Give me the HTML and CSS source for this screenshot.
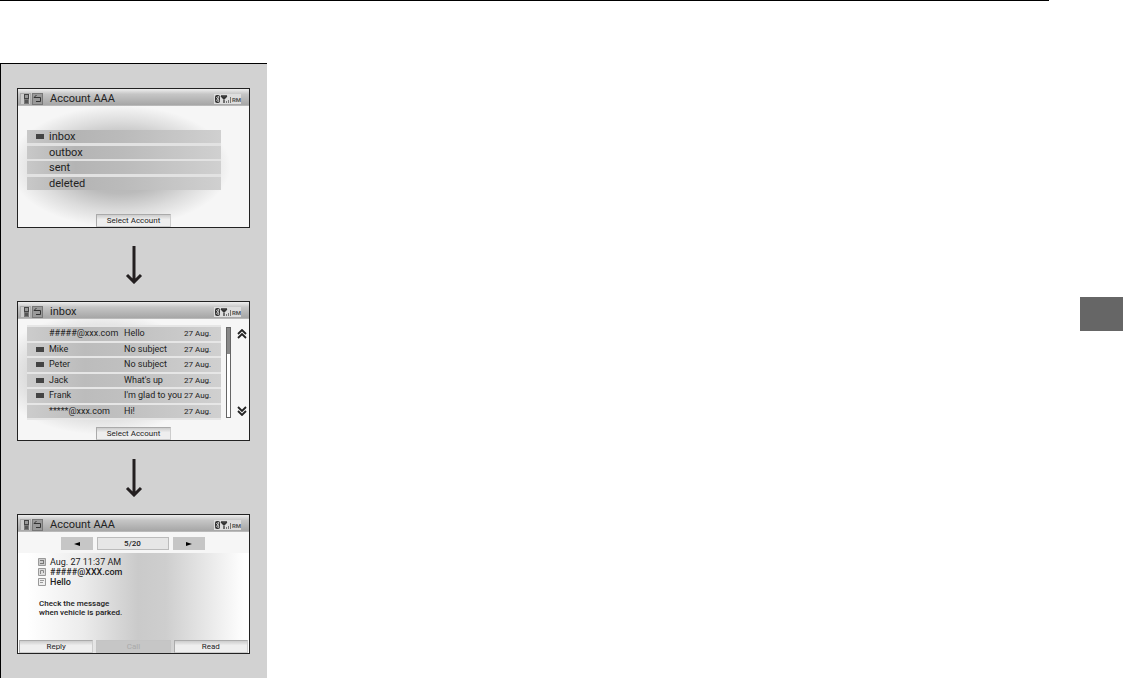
FILE: index.html
```
<!DOCTYPE html>
<html lang="en">
<head>
  <meta charset="UTF-8" />
  <meta name="viewport" content="width=device-width, initial-scale=1.0" />
  <title>Mail screens</title>
  <link rel="stylesheet" href="styles.css">
</head>
<body>
  <!-- shared icons -->
  <svg class="sprite" aria-hidden="true">
    <symbol id="phone" viewBox="0 0 9 10">
      <path d="M3 0h5v10H3z" fill="#777" />
      <path d="M3 0h5v5H3z" fill="#444" />
      <path d="M4 1h3v3H4z" fill="#999" />
      <path d="M4 6h3v3H4z" fill="#555" />
    </symbol>
    <symbol id="back" viewBox="0 0 9 10">
      <path d="M1 3.500h6.500v4H3M3.500 1L1 3.500h3" fill="none" stroke="#333" stroke-width="1" />
    </symbol>
    <symbol id="signal" viewBox="0 0 18 10">
      <rect x="1" y="1" width="5" height="8" rx="2" fill="#333" />
      <path d="M2 3l3 3-1 2V2l1 1-3 4" fill="none" stroke="#ddd" stroke-width=".7" />
      <path d="M7 2h6M7 2l3 3 3-3M10 2v7" fill="none" stroke="#333" stroke-width="1.3" />
      <path d="M12.500 7v2M14.500 6v3M16.500 3v6" stroke="#777" stroke-width="1" />
    </symbol>
    <symbol id="arrow" viewBox="0 0 18 38">
      <path d="M9 0v36M2 29l7 7 7-7" fill="none" stroke="#231f20" stroke-width="3" />
    </symbol>
    <symbol id="chevrons" viewBox="0 0 10 10">
      <path d="M1 5l4-4 4 4M1 9l4-4 4 4" fill="none" stroke="#222" stroke-width="1.8" />
    </symbol>
  </svg>

  <main class="page">
    <section class="steps">
      <article class="screen glow">
        <header class="titlebar">
          <button class="tool" aria-label="Phone"><svg><use href="#phone" /></svg></button>
          <button class="tool dark" aria-label="Back"><svg><use href="#back" /></svg></button>
          <h2>Account AAA</h2>
          <span class="status"><svg><use href="#signal" /></svg>RM</span>
        </header>
        <ul class="folders">
          <li><a href="#inbox"><i class="mark"></i>inbox</a></li>
          <li><a href="#outbox">outbox</a></li>
          <li><a href="#sent">sent</a></li>
          <li><a href="#deleted">deleted</a></li>
        </ul>
        <footer class="actions"><button>Select Account</button></footer>
      </article>

      <svg class="next" aria-hidden="true"><use href="#arrow" /></svg>

      <article class="screen glow faint" id="inbox">
        <header class="titlebar">
          <button class="tool" aria-label="Phone"><svg><use href="#phone" /></svg></button>
          <button class="tool dark" aria-label="Back"><svg><use href="#back" /></svg></button>
          <h2>inbox</h2>
          <span class="status"><svg><use href="#signal" /></svg>RM</span>
        </header>
        <div class="mail">
          <table>
            <tr><td class="flag"></td><td class="from">#####@xxx.com</td><td>Hello</td><td class="date">27 Aug.</td></tr>
            <tr><td class="flag"><i class="mark"></i></td><td class="from">Mike</td><td>No subject</td><td class="date">27 Aug.</td></tr>
            <tr><td class="flag"><i class="mark"></i></td><td class="from">Peter</td><td>No subject</td><td class="date">27 Aug.</td></tr>
            <tr><td class="flag"><i class="mark"></i></td><td class="from">Jack</td><td>What's up</td><td class="date">27 Aug.</td></tr>
            <tr><td class="flag"><i class="mark"></i></td><td class="from">Frank</td><td>I'm glad to you</td><td class="date">27 Aug.</td></tr>
            <tr><td class="flag"></td><td class="from">*****@xxx.com</td><td>Hi!</td><td class="date">27 Aug.</td></tr>
          </table>
          <div class="track"><div class="thumb"></div></div>
          <div class="scroll">
            <button aria-label="Page up"><svg><use href="#chevrons" /></svg></button>
            <button class="down" aria-label="Page down"><svg><use href="#chevrons" /></svg></button>
          </div>
        </div>
        <footer class="actions"><button>Select Account</button></footer>
      </article>

      <svg class="next" aria-hidden="true"><use href="#arrow" /></svg>

      <article class="screen message">
        <header class="titlebar">
          <button class="tool" aria-label="Phone"><svg><use href="#phone" /></svg></button>
          <button class="tool dark" aria-label="Back"><svg><use href="#back" /></svg></button>
          <h2>Account AAA</h2>
          <span class="status"><svg><use href="#signal" /></svg>RM</span>
        </header>
        <nav class="pager">
          <button aria-label="Previous"><svg viewBox="0 0 6 6"><path d="M6 1v4L0 3z" /></svg></button>
          <span class="count">5/20</span>
          <button aria-label="Next"><svg viewBox="0 0 6 6"><path d="M0 1v4l6-2z" /></svg></button>
        </nav>
        <ul class="details">
          <li class="when"><svg viewBox="0 0 8 8"><path d="M.5.5h7v7h-7z" fill="#ccc" stroke="#999" /><path d="M2 2.500h4M2 5.500h4M5.500 2v4" stroke="#777" /></svg>Aug. 27 11:37 AM</li>
          <li><svg viewBox="0 0 8 8"><path d="M.5.5h7v7h-7z" fill="#ddd" stroke="#999" /><path d="M2.500 6V2.500h3V5" fill="none" stroke="#888" /></svg>#####@XXX.com</li>
          <li><svg viewBox="0 0 8 8"><path d="M.5.5h7v7h-7z" fill="#eee" stroke="#999" /><path d="M2 2.500h4M2 4.500h3" stroke="#999" /></svg>Hello</li>
        </ul>
        <p class="text">Check the message<br>when vehicle is parked.</p>
        <footer class="actions">
          <button>Reply</button>
          <button disabled>Call</button>
          <button>Read</button>
        </footer>
      </article>
    </section>
  </main>
  <aside class="rail"><div class="tab"></div></aside>
</body>
</html>
```
FILE: styles.css
```
* {
  box-sizing: border-box;
}

body {
  margin: 0;
  display: flex;
  min-height: 100vh;
  background: #fff;
  color: #222;
  font-family: Roboto, "Liberation Sans", sans-serif;
}

h2, p, ul {
  margin: 0;
  padding: 0;
}

ul {
  list-style: none;
}

button {
  padding: 0;
  border: 0;
  color: inherit;
  font-family: inherit;
  cursor: pointer;
}

svg {
  display: block;
}

.sprite {
  position: absolute;
  width: 0;
  height: 0;
}

/* page frame */
.page {
  flex: 1;
  display: flex;
  align-items: stretch;
  padding-top: 62px;
  border-top: 1px solid #000;
}

.rail {
  width: 74px;
  padding: 297px 0 0 31px;
}

.tab {
  height: 34px;
  background: #666;
}

.steps {
  flex: 0 0 267px;
  padding: 24px 17px 24px 16px;
  border-top: 1px solid #000;
  border-left: 1px solid #000;
  background: #d2d2d2;
}

.next {
  width: 18px;
  height: 38px;
  margin: 18px auto 17px;
}

/* device screen */
.screen {
  display: flex;
  flex-direction: column;
  min-height: 140px;
  border: 1px solid #222;
  background: #f6f6f6;
}

.glow {
  background: radial-gradient(48% 44% at 44% 56%, #aaa 0%, #bbb 45%, #dcdcdc 74%, #f6f6f6 100%) #f6f6f6;
}

.faint {
  background: radial-gradient(46% 44% at 36% 52%, #ccc 0%, #d4d4d4 60%, #f6f6f6 100%) #f6f6f6;
}

.titlebar {
  display: flex;
  align-items: center;
  gap: 1px;
  height: 17px;
  padding: 3px 8px 0 2px;
  background: linear-gradient(#eee, #c6c6c6 30%, #a6a6a6 94%, #ccc);
}

.titlebar h2 {
  flex: 1;
  padding-left: 6px;
  font-size: 11px;
  line-height: 14px;
  font-weight: 400;
}

.tool {
  width: 11px;
  height: 12px;
  border: 1px solid #aaa;
  background: #ccc;
}

.tool.dark {
  background: #999;
  border-color: #777;
}

.tool svg {
  width: 9px;
  height: 10px;
}

.status {
  display: flex;
  align-items: center;
  height: 10px;
  background: #ddd;
  color: #555;
  font-size: 6px;
  font-weight: 700;
}

.status svg {
  width: 18px;
  height: 10px;
}

.mark {
  display: block;
  width: 8px;
  height: 5px;
  background: #444;
}

/* folder list */
.folders {
  display: flex;
  flex-direction: column;
  justify-content: space-between;
  height: 60px;
  margin: 24px 28px 0 9px;
  background: #e2e2e2;
}

.folders a {
  display: flex;
  align-items: center;
  height: 13px;
  padding-left: 22px;
  background: linear-gradient(90deg, #c8c8c8, #b4b4b4 25%, #bbb 50%, #d0d0d0);
  color: inherit;
  font-size: 11px;
  text-decoration: none;
}

.folders .mark {
  margin: 0 5px 0 -13px;
}

/* mail list */
.mail {
  display: flex;
  margin: 6px 2px 0 9px;
}

.mail table {
  flex: 1;
  height: 95px;
  table-layout: fixed;
  border-collapse: separate;
  border-spacing: 0 2px;
  background: #e6e6e6;
}

.mail tr {
  background: linear-gradient(90deg, #ccc, #bcbcbc 30%, #c0c0c0 50%, #d0d0d0);
}

.mail td {
  padding: 0;
  font-size: 9px;
  line-height: 13px;
  white-space: nowrap;
}

.mail .flag {
  width: 22px;
  padding-left: 9px;
}

.mail .from {
  width: 75px;
}

.mail .date {
  width: 37px;
  font-size: 8px;
}

.track {
  width: 5px;
  margin: 2px 6px 2px 5px;
  border: 1px solid #666;
  background: #fff;
}

.thumb {
  height: 26px;
  background: #888;
}

.scroll {
  display: flex;
  flex-direction: column;
  justify-content: space-between;
  padding: 4px 0;
}

.scroll button {
  background: none;
}

.scroll svg {
  width: 10px;
  height: 10px;
}

.scroll .down {
  transform: rotate(180deg);
}

/* message */
.message {
  background: linear-gradient(90deg, #fff 4%, #ececec 28%, #cacaca 52%, #cecece 64%, #fff 98%);
}

.pager {
  display: grid;
  grid-template-columns: 32px 72px 32px;
  justify-content: center;
  gap: 4px;
  padding: 5px 2px 3px 0;
  background: #f6f6f6;
}

.pager button {
  display: grid;
  place-items: center;
  background: #c6c6c6;
}

.pager svg {
  width: 6px;
  height: 6px;
}

.count {
  height: 13px;
  border: 1px solid #bbb;
  background: #e6e6e6;
  font-size: 8px;
  line-height: 12px;
  font-weight: 500;
  text-align: center;
}

.details {
  margin: 4px 20px 0;
  font-size: 9px;
  line-height: 10px;
  font-weight: 500;
}

.details li {
  display: flex;
  align-items: center;
  gap: 4px;
}

.details .when {
  font-weight: 400;
}

.details svg {
  width: 8px;
  height: 8px;
}

.text {
  margin: 12px 21px 0;
  font-size: 8px;
  line-height: 9px;
  font-weight: 500;
}

/* bottom buttons */
.actions {
  display: grid;
  grid-template-columns: repeat(3, 1fr);
  gap: 3px;
  margin-top: auto;
  padding: 0 1px;
}

.actions button {
  height: 13px;
  border: 1px solid #aaa;
  border-right-color: #ccc;
  border-bottom-color: #ccc;
  background: linear-gradient(#ccc, #eee 40%);
  font-size: 8px;
  line-height: 11px;
}

.actions button:only-child {
  grid-column: 2;
}

.actions button:disabled {
  border-color: #c4c4c4;
  background: #c6c6c6;
  color: #aaa;
}
```
